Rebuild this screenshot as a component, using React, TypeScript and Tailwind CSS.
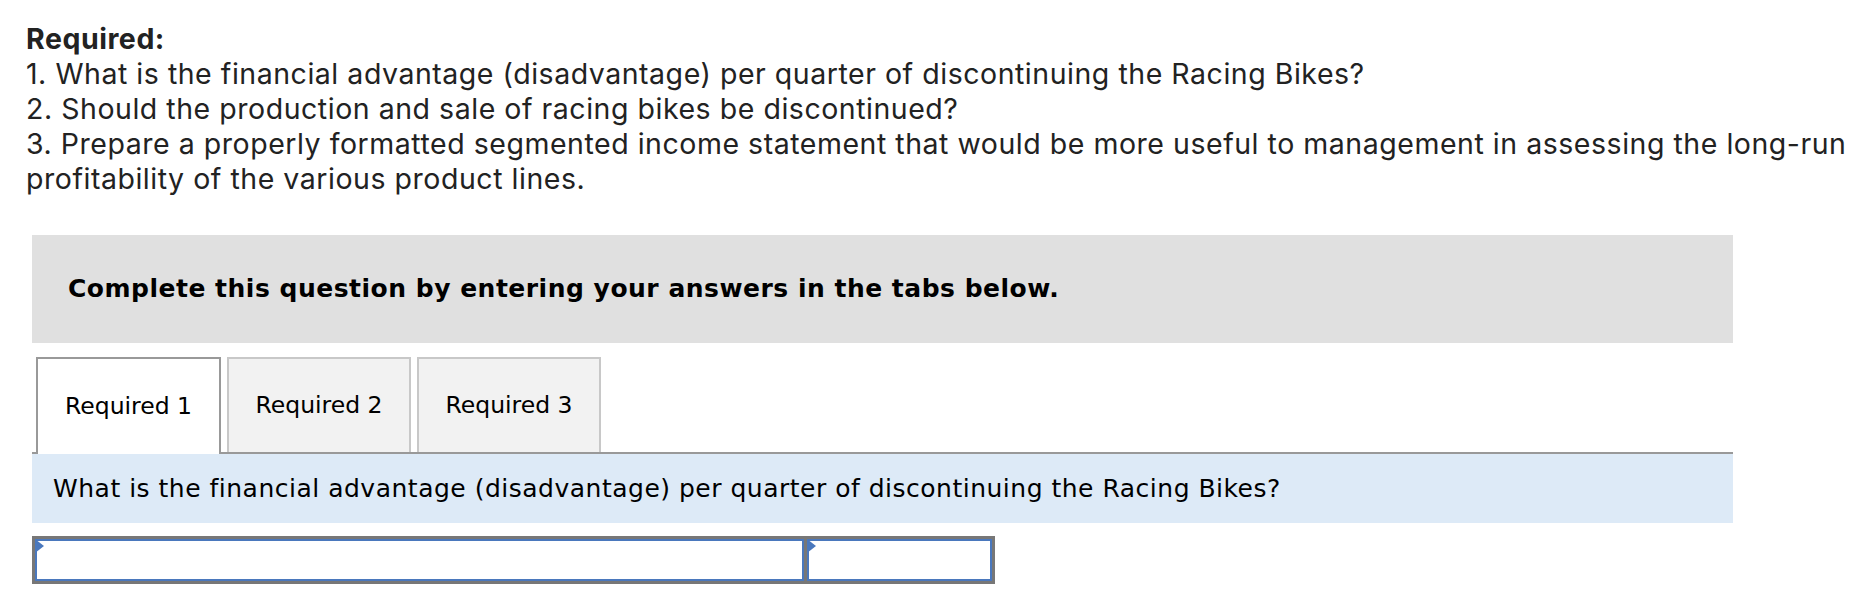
import React from 'react';

const tabs = ['Required 1', 'Required 2', 'Required 3'];

function Marker() {
  return (
    <svg className="absolute left-0 top-0" width="9" height="14" viewBox="0 0 9 14">
      <path d="M0 0 L9 7 L0 14 Z" fill="#4a78bd" />
    </svg>
  );
}

export default function App() {
  return (
    <div className="w-[1873px] h-[591px] bg-white overflow-hidden">
      {/* Question text */}
      <div className="pl-[26px] pt-[21px] text-[28.5px] tracking-[0.53px] leading-[35px] text-[#222] font-['Inter',sans-serif]">
        <p className="font-bold">Required:</p>
        <p>1. What is the financial advantage (disadvantage) per quarter of discontinuing the Racing Bikes?</p>
        <p>2. Should the production and sale of racing bikes be discontinued?</p>
        <p>
          3. Prepare a properly formatted segmented income statement that would be more useful to management in assessing the long-run
          <br />
          profitability of the various product lines.
        </p>
      </div>

      <div className="ml-[32px] w-[1701px] mt-[39px] font-['DejaVu_Sans',Verdana,sans-serif]">
        {/* Instructions box */}
        <div className="h-[108px] bg-[#e0e0e0] flex items-center pl-[36px]">
          <span className="text-[25px] tracking-[0.5px] font-bold text-black">
            Complete this question by entering your answers in the tabs below.
          </span>
        </div>

        {/* Tabs */}
        <div className="mt-[14px] flex pl-[4px] gap-[6px] h-[95px]">
          {tabs.map((t, i) => (
            <div
              key={t}
              className={
                i === 0
                  ? 'w-[185px] h-[97px] bg-white border-2 border-b-0 border-[#999] flex items-center justify-center text-[23.5px] text-black relative z-10'
                  : 'w-[184px] h-[95px] bg-[#f2f2f2] border-2 border-b-0 border-[#c8c8c8] flex items-center justify-center text-[23.5px] text-black'
              }
            >
              {t}
            </div>
          ))}
        </div>

        {/* Question band */}
        <div className="border-t-2 border-[#999] bg-[#ddeaf7] h-[71px] flex items-center pl-[21px]">
          <span className="text-[25px] tracking-[0.5px] text-black">
            What is the financial advantage (disadvantage) per quarter of discontinuing the Racing Bikes?
          </span>
        </div>

        {/* Answer inputs */}
        <div className="mt-[13px] flex">
          <div className="w-[775px] h-[48px] border-[3px] border-[#777] relative">
            <div className="w-full h-full border-2 border-[#4a78bd] bg-white" />
            <Marker />
          </div>
          <div className="w-[188px] h-[48px] border-[3px] border-l-0 border-[#777] relative">
            <div className="w-full h-full border-2 border-[#4a78bd] bg-white" />
            <Marker />
          </div>
        </div>
      </div>
    </div>
  );
}
